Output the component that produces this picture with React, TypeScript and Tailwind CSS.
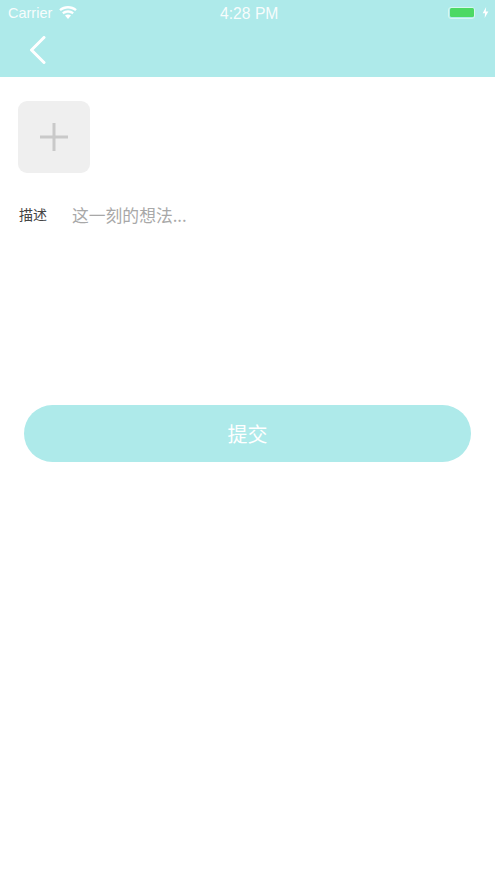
const fontStack = '"Noto Sans CJK SC", sans-serif';

function Wifi() {
  return (
    <svg width="18" height="13" viewBox="0 0 18 13" fill="#fff">
      <path d="M9 13 L6 9.6 C7.8 8.2 10.2 8.2 12 9.6 Z" />
      <path d="M4.7 8.2 L3.1 6.4 C6.5 3.6 11.5 3.6 14.9 6.4 L13.3 8.2 C10.8 6.2 7.2 6.2 4.7 8.2 Z" />
      <path d="M1.8 5 L0.2 3.2 C5.2 -1 12.8 -1 17.8 3.2 L16.2 5 C12.2 1.6 5.8 1.6 1.8 5 Z" />
    </svg>
  );
}

function StatusBar() {
  return (
    <div className="relative flex h-[27px] items-center justify-between pl-[8px] pr-[6px] text-white">
      <div className="flex items-center gap-[7px]">
        <span className="text-[14.5px] leading-none font-['Liberation_Sans',sans-serif] opacity-90">Carrier</span>
        <div className="-mt-[3px]"><Wifi /></div>
      </div>
      <span className="absolute left-[220px] top-[6px] text-[15.7px] leading-none font-medium font-['Liberation_Sans',sans-serif] opacity-90">4:28 PM</span>
      <div className="-mt-[2px] flex items-center gap-[7px]">
        <div className="flex h-[12px] w-[27px] items-center justify-center rounded-[3px] border border-[#d6f7ee]">
          <div className="h-[9px] w-[24px] rounded-[1.5px] bg-[#4cd964]" />
        </div>
        <svg width="7" height="11" viewBox="0 0 7 12" fill="#fff">
          <path d="M4.2 0 L0.4 6.8 H3 L2.6 12 L6.6 4.8 H3.8 Z" />
        </svg>
      </div>
    </div>
  );
}

export default function App() {
  return (
    <div className="flex h-[881px] w-[495px] flex-col overflow-hidden bg-white" style={{ fontFamily: fontStack }}>
      <header className="h-[77px] bg-[#aeeaea]">
        <StatusBar />
        <div className="pl-[29px] pt-[9px]">
          <svg width="17" height="28" viewBox="0 0 17 28" fill="none" stroke="#fff" strokeWidth="3" strokeLinecap="round" strokeLinejoin="round">
            <path d="M15 1.5 L2.5 14 L15 26.5" />
          </svg>
        </div>
      </header>

      <main className="flex flex-col">
        <div className="ml-[18px] mt-[24px] flex h-[72px] w-[72px] items-center justify-center rounded-[9px] bg-[#efefef]">
          <svg width="28" height="28" viewBox="0 0 28 28" fill="none" stroke="#c9c9c9" strokeWidth="3">
            <path d="M0 14 H28 M14 0 V28" />
          </svg>
        </div>

        <div className="mt-[29px] flex items-start pl-[19px]">
          <span className="w-[53px] text-[14px] leading-[24px] text-[#444444]">描述</span>
          <span className="text-[16.8px] leading-[26px] text-[#a8a8a8]">这一刻的想法...</span>
        </div>

        <button className="mx-[24px] mt-[177px] flex h-[57px] items-center justify-center rounded-[28.5px] bg-[#aeeaea] text-[20px] text-white">
          提交
        </button>
      </main>
    </div>
  );
}
